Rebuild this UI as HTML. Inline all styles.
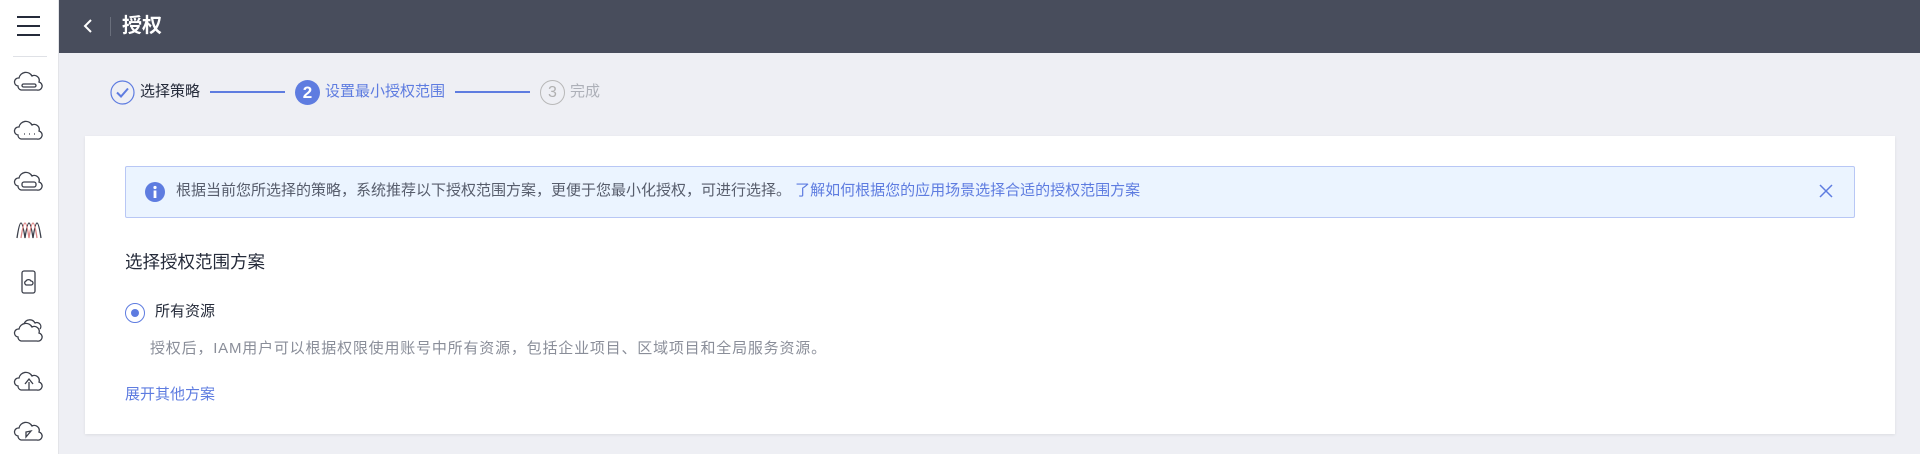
<!DOCTYPE html>
<html><head><meta charset="utf-8"><style>
*{margin:0;padding:0;box-sizing:border-box}
body{width:1920px;height:454px;background:#eeeff4;font-family:"Liberation Sans","Noto Sans CJK SC",sans-serif;position:relative;overflow:hidden;font-size:15px;color:#252b3a}
.abs{position:absolute}
#side{left:0;top:0;width:59px;height:454px;background:#fff;border-right:1px solid #e3e4e8}
#hdr{left:59px;top:0;right:0;height:53px;background:#484d5c}
</style></head><body>
<div id="side" class="abs">
  <div class="abs" style="left:17px;top:16px;width:23px;height:2px;background:#252b3a"></div>
  <div class="abs" style="left:17px;top:25px;width:23px;height:2px;background:#252b3a"></div>
  <div class="abs" style="left:17px;top:34px;width:23px;height:2px;background:#252b3a"></div>
  <div class="abs" style="left:13px;top:56px;width:34px;height:1px;background:#dfe1e6"></div>
  <svg class="abs" style="left:0;top:0" width="59" height="454" fill="none" stroke="#3b3f4a" stroke-width="1.3">
    <g transform="translate(29,82)"><path d="M-11 4a4 4 0 0 1 1-8a7 7 0 0 1 13-2a5 5 0 0 1 7 6a4 4 0 0 1-2 8h-16a4 4 0 0 1-3-4z"/><rect x="-7" y="2" width="14" height="3" rx="1.5"/></g>
    <g transform="translate(29,131)"><path d="M-11 4a4 4 0 0 1 1-8a7 7 0 0 1 13-2a5 5 0 0 1 7 6a4 4 0 0 1-2 8h-16a4 4 0 0 1-3-4z"/><path d="M-5 3h1M0 3h1M5 3h1"/></g>
    <g transform="translate(29,182)"><path d="M-11 4a4 4 0 0 1 1-8a7 7 0 0 1 13-2a5 5 0 0 1 7 6a4 4 0 0 1-2 8h-16a4 4 0 0 1-3-4z"/><rect x="-7" y="0" width="14" height="5" rx="2"/></g>
    <g transform="translate(29,230)"><path d="M-12 8c3-20 5-20 8 0c3-20 5-20 8 0c3-20 5-20 8 0"/><path d="M-8 8c3-20 5-20 8 0c3-20 5-20 8 0" stroke="#d88"/></g>
    <g transform="translate(29,282)"><rect x="-7" y="-11" width="13" height="22" rx="2"/><path d="M-4 2a2 2 0 0 1 1-3a3 3 0 0 1 5 0a2 2 0 0 1 0 4h-5z"/></g>
    <g transform="translate(29,332)"><path d="M-11 5a4 4 0 0 1 1-8a7 7 0 0 1 13-2a5 5 0 0 1 7 6a4 4 0 0 1-2 8h-16a4 4 0 0 1-3-4z"/><path d="M-5-8a6 6 0 0 1 11-1a4 4 0 0 1 5 6"/></g>
    <g transform="translate(29,382)"><path d="M-11 4a4 4 0 0 1 1-8a7 7 0 0 1 13-2a5 5 0 0 1 7 6a4 4 0 0 1-2 8h-16a4 4 0 0 1-3-4z"/><path d="M0 8v-8M-4 2l4-5l4 5"/></g>
    <g transform="translate(29,432)"><path d="M-11 4a4 4 0 0 1 1-8a7 7 0 0 1 13-2a5 5 0 0 1 7 6a4 4 0 0 1-2 8h-16a4 4 0 0 1-3-4z"/><path d="M-3 5l5-6l-5 1z"/></g>
  </svg>
</div>
<div id="hdr" class="abs">
  <svg class="abs" style="left:23px;top:18px" width="12" height="16" fill="none" stroke="#fff" stroke-width="2"><path d="M9 2L3 8l6 6"/></svg>
  <div class="abs" style="left:51px;top:17px;width:1px;height:19px;background:#6a6f7c"></div>
  <div class="abs" style="left:63px;top:12px;color:#fff;font-size:20px;font-weight:bold;line-height:28px">授权</div>
</div>
<svg class="abs" style="left:110px;top:80px" width="25" height="25" fill="none"><circle cx="12.5" cy="12.5" r="11.5" stroke="#5e7ce0" stroke-width="1.2"/><path d="M7 12.5l4 4l7-8" stroke="#5e7ce0" stroke-width="2"/></svg>
<div class="abs" style="left:140px;top:82px;font-size:15px;line-height:20px;color:#252b3a">选择策略</div>
<div class="abs" style="left:210px;top:91px;width:75px;height:2px;background:#5e7ce0"></div>
<div class="abs" style="left:295px;top:80px;width:25px;height:25px;border-radius:50%;background:#5e7ce0;color:#fff;text-align:center;font-size:17px;line-height:25px;font-weight:bold">2</div>
<div class="abs" style="left:325px;top:82px;font-size:15px;line-height:20px;color:#5e7ce0">设置最小授权范围</div>
<div class="abs" style="left:455px;top:91px;width:75px;height:2px;background:#5e7ce0"></div>
<div class="abs" style="left:540px;top:80px;width:25px;height:25px;border-radius:50%;border:1px solid #b8b8b8;color:#b0b0b0;text-align:center;font-size:16px;line-height:23px">3</div>
<div class="abs" style="left:570px;top:82px;font-size:15px;line-height:20px;color:#adb0b8">完成</div>
<div class="abs" style="left:85px;top:136px;width:1810px;height:298px;background:#fff;box-shadow:0 1px 3px rgba(0,0,0,.08)"></div>
<div class="abs" style="left:125px;top:166px;width:1730px;height:52px;background:#ebf4ff;border:1px solid #b8c7f5;border-radius:2px"></div>
<svg class="abs" style="left:145px;top:182px" width="20" height="20"><circle cx="10" cy="10" r="10" fill="#5e7ce0"/><circle cx="10" cy="5.5" r="1.6" fill="#fff"/><rect x="8.6" y="8.5" width="2.8" height="7.5" fill="#fff"/></svg>
<div class="abs" style="left:176px;top:181px;font-size:15px;line-height:20px;color:#575d6c;white-space:nowrap">根据当前您所选择的策略，系统推荐以下授权范围方案，更便于您最小化授权，可进行选择。 <span style="color:#5e7ce0">了解如何根据您的应用场景选择合适的授权范围方案</span></div>
<svg class="abs" style="left:1819px;top:184px" width="14" height="14" fill="none" stroke="#5e7ce0" stroke-width="1.5"><path d="M1 1l12 12M13 1L1 13"/></svg>
<div class="abs" style="left:125px;top:250px;font-size:17.5px;line-height:24px;color:#252b3a">选择授权范围方案</div>
<div class="abs" style="left:125px;top:303px;width:20px;height:20px;border-radius:50%;border:1.5px solid #5e7ce0"></div>
<div class="abs" style="left:131px;top:309px;width:8px;height:8px;border-radius:50%;background:#5e7ce0"></div>
<div class="abs" style="left:155px;top:302px;font-size:15px;line-height:20px;color:#252b3a">所有资源</div>
<div class="abs" style="left:150px;top:339px;font-size:15px;line-height:20px;color:#8a8e99;white-space:nowrap;letter-spacing:0.8px">授权后，IAM用户可以根据权限使用账号中所有资源，包括企业项目、区域项目和全局服务资源。</div>
<div class="abs" style="left:125px;top:385px;font-size:15px;line-height:20px;color:#5e7ce0">展开其他方案</div>
</body></html>
